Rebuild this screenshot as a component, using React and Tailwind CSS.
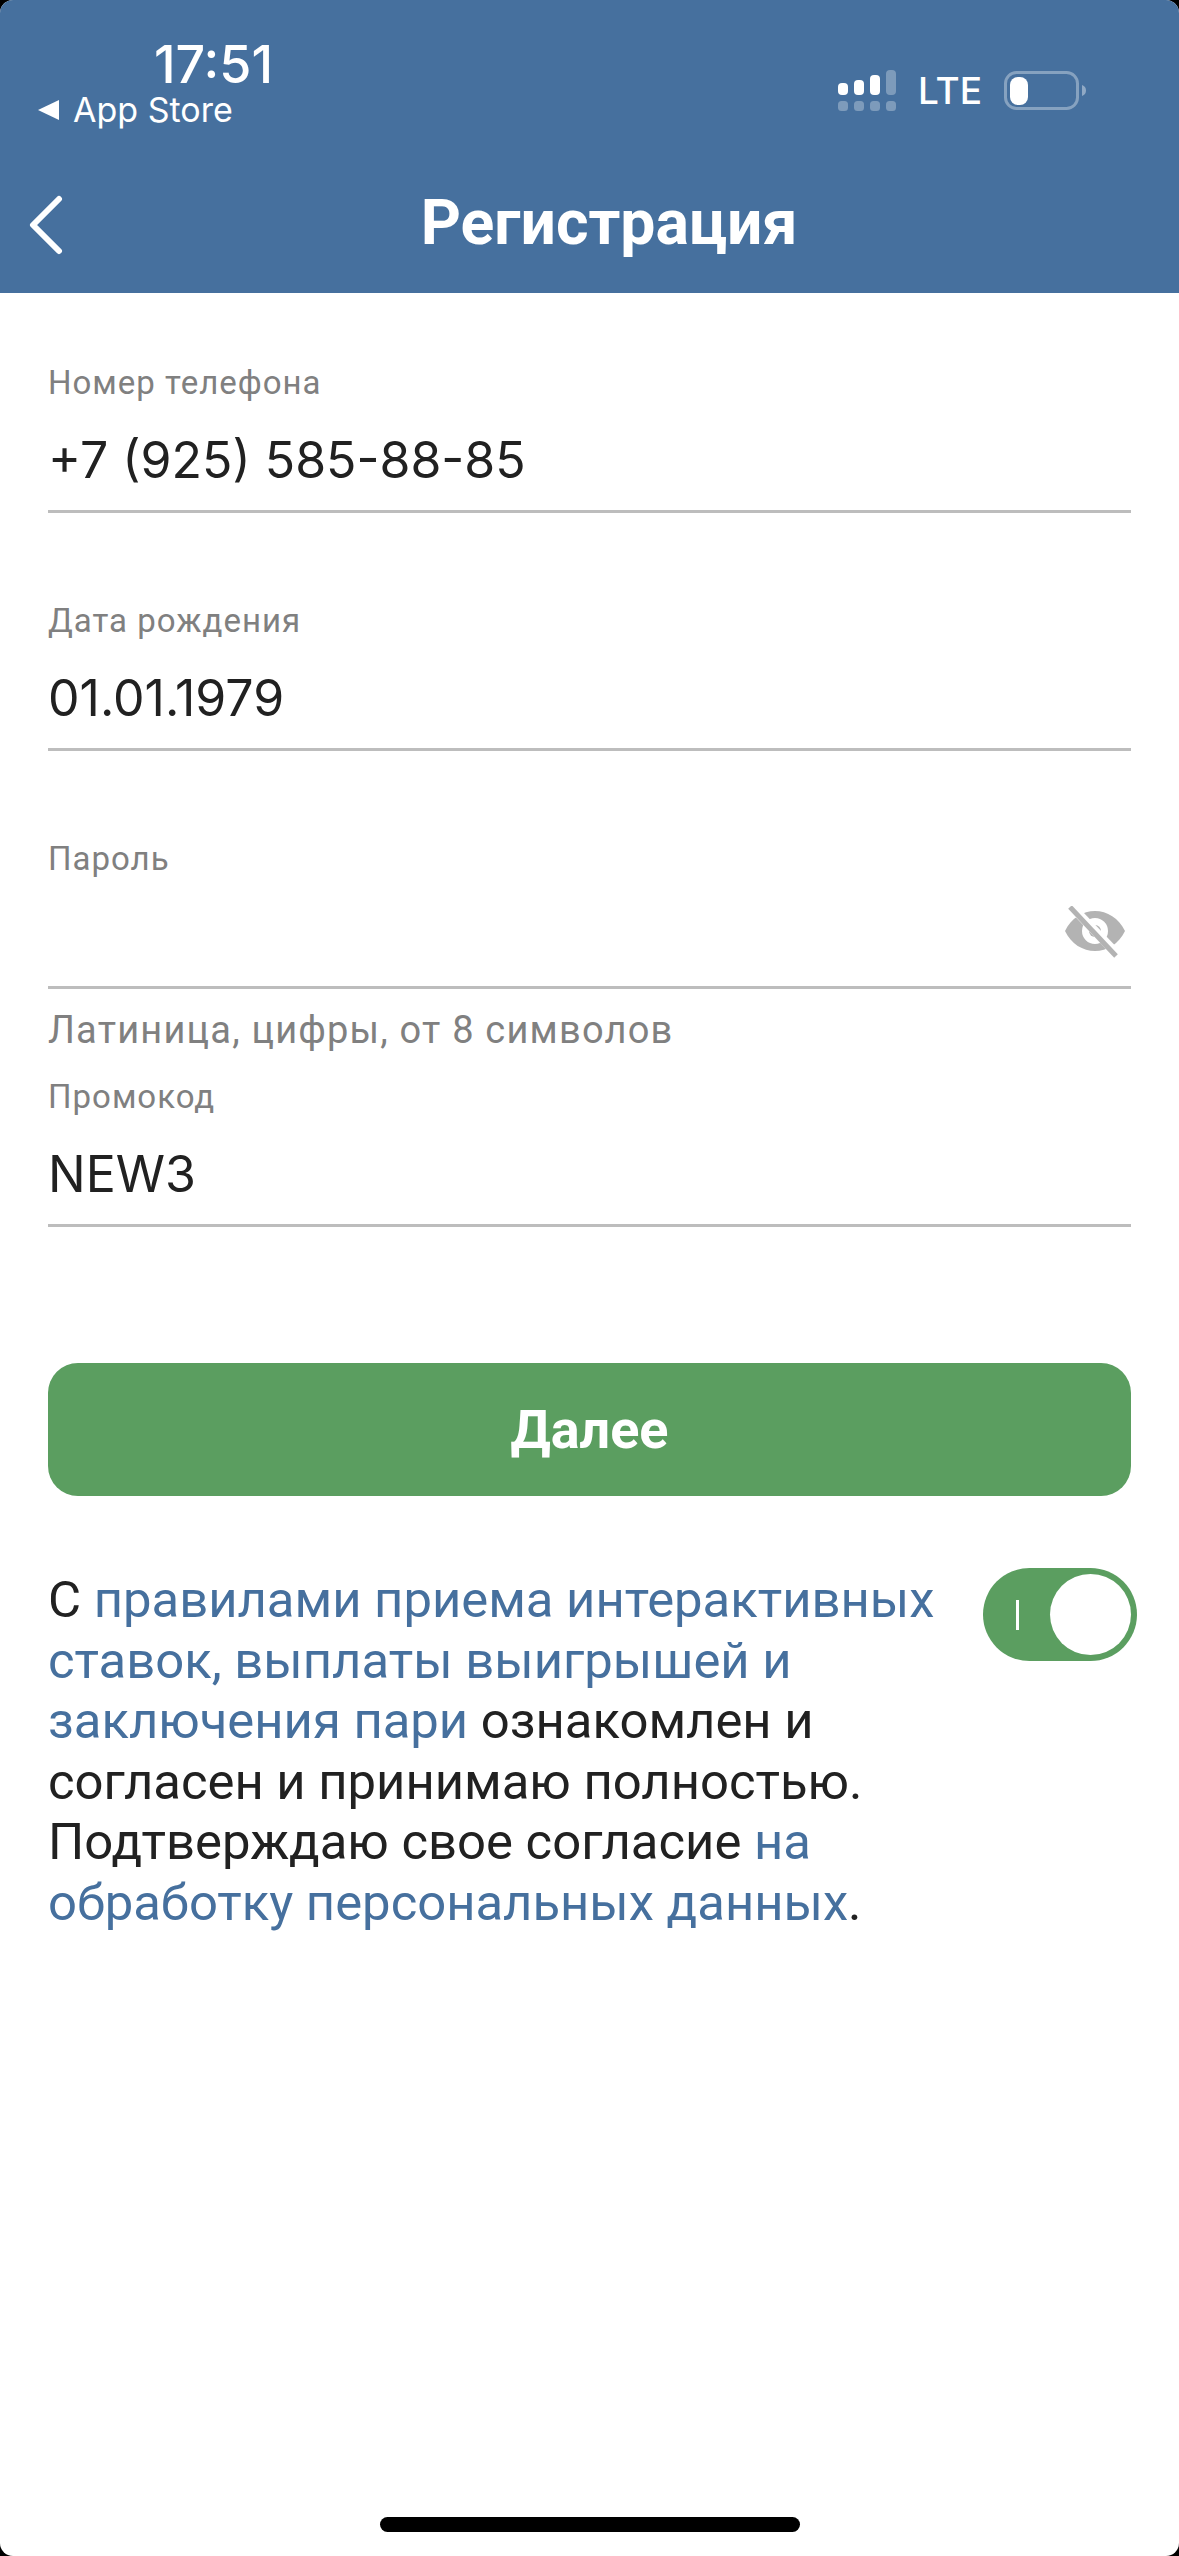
function Field({ label, value, children }) {
  return (
    <div>
      <div className="h-[40px] font-['Roboto',sans-serif] text-[33px] leading-[40px] tracking-[1px] text-[#808080]">{label}</div>
      <div className="mt-[17px] flex h-[93px] items-center justify-between border-b-[3px] border-[#bdbdbd] pb-[10px] font-['Inter',sans-serif] text-[50px] text-[#212121]">
        <span>{value}</span>
        {children}
      </div>
    </div>
  );
}

function Signal() {
  return (
    <svg width="58" height="42" viewBox="0 0 58 42" className="block">
      <rect x="0" y="13" width="10" height="12" rx="4" fill="#fff" />
      <rect x="16" y="10" width="10" height="15" rx="4" fill="#fff" />
      <rect x="32" y="5" width="10" height="20" rx="4" fill="#fff" />
      <rect x="48" y="0" width="10" height="25" rx="4" fill="#fff" fillOpacity="0.3" />
      <rect x="0" y="31" width="10" height="10" rx="3.5" fill="#fff" fillOpacity="0.3" />
      <rect x="16" y="31" width="10" height="10" rx="3.5" fill="#fff" fillOpacity="0.3" />
      <rect x="32" y="31" width="10" height="10" rx="3.5" fill="#fff" fillOpacity="0.3" />
      <rect x="48" y="31" width="10" height="10" rx="3.5" fill="#fff" fillOpacity="0.3" />
    </svg>
  );
}

function Battery() {
  return (
    <svg width="84" height="40" viewBox="0 0 84 40" className="block">
      <rect x="1.5" y="1.5" width="72" height="36" rx="11" fill="none" stroke="#fff" strokeOpacity="0.35" strokeWidth="3" />
      <rect x="6" y="6" width="18" height="28" rx="8" fill="#fff" />
      <path d="M78 14c3 1 4 3 4 5.500s-1 4.500-4 5.500z" fill="#fff" fillOpacity="0.4" />
    </svg>
  );
}

function BackArrow() {
  return (
    <svg width="36" height="60" viewBox="0 0 36 60" className="block shrink-0">
      <path d="M31 4L5 30l26 26" fill="none" stroke="#fff" strokeWidth="6" strokeLinecap="round" strokeLinejoin="round" />
    </svg>
  );
}

function EyeOff() {
  return (
    <svg width="60" height="52" viewBox="0 0 60 52" className="mb-[8px] mr-[6px] block">
      <path
        fillRule="evenodd"
        fill="#b3b3b3"
        d="M0 25C6 12 18 5 30 5s24 7 30 20c-6 13-18 20-30 20S6 38 0 25zm30-13a13 13 0 1 0 0 26 13 13 0 0 0 0-26z"
      />
      <circle cx="30" cy="25" r="6" fill="#b3b3b3" />
      <path d="M7 1l46 48" stroke="#ffffff" strokeWidth="9" />
      <path d="M5 1l46 49" stroke="#b3b3b3" strokeWidth="5" />
    </svg>
  );
}

function Toggle() {
  return (
    <div className="mt-[2px] flex h-[93px] w-[154px] shrink-0 items-center justify-between rounded-full bg-[#5b9e60] pl-[33px] pr-[6px]">
      <div className="h-[30px] w-[3px] bg-white" />
      <div className="h-[81px] w-[81px] rounded-full bg-white" />
    </div>
  );
}

export default function App() {
  return (
    <div className="h-[2556px] w-[1179px] bg-black">
      <div className="flex h-full flex-col overflow-hidden rounded-[13px] bg-white font-['Roboto',sans-serif]">
        <header className="h-[293px] shrink-0 bg-[#46709e] text-white">
          <div className="flex h-[165px] justify-between pl-[38px] pr-[91px] font-['Inter',sans-serif]">
            <div className="pt-[37px]">
              <div className="pl-[116px] text-[52px] leading-[56px] font-medium">17:51</div>
              <div className="-mt-[3px] flex items-center gap-[14px] text-[34px] leading-[40px]">
                <span className="h-0 w-0 border-y-[10px] border-r-[21px] border-y-transparent border-r-white" />
                <span>App Store</span>
              </div>
            </div>
            <div className="flex items-center gap-[22px] pt-[16px]">
              <Signal />
              <span className="text-[37px] font-medium">LTE</span>
              <Battery />
            </div>
          </div>
          <div className="mt-[28px] flex h-[64px] items-center pl-[28px]">
            <BackArrow />
            <h1 className="mb-[4px] flex-1 pr-[25px] text-center text-[62.500px] leading-none font-bold">Регистрация</h1>
          </div>
        </header>

        <main className="flex flex-1 flex-col px-[48px]">
          <div className="flex flex-col gap-[88px] pt-[70px]">
            <Field label="Номер телефона" value="+7 (925) 585-88-85" />
            <Field label="Дата рождения" value="01.01.1979" />
          </div>
          <div className="mt-[88px]">
            <Field label="Пароль" value="">
              <EyeOff />
            </Field>
          </div>
          <div className="mt-[21px] text-[38px] leading-[40px] tracking-[1.2px] text-[#808080]">Латиница, цифры, от 8 символов</div>
          <div className="mt-[27px]">
            <Field label="Промокод" value="NEW3" />
          </div>

          <button className="mt-[136px] h-[133px] w-full rounded-[30px] bg-[#5b9e60] text-[54px] font-bold text-white">
            Далее
          </button>

          <div className="mt-[70px] flex justify-between">
            <p className="w-[900px] pt-[4px] text-[50.800px] leading-[60.500px] text-[#212121]">
              С <span className="text-[#46709e]">правилами приема интерактивных ставок, выплаты выигрышей и заключения пари</span>{" "}
              ознакомлен и согласен и принимаю полностью. Подтверждаю свое согласие{" "}
              <span className="text-[#46709e]">на обработку персональных данных</span>.
            </p>
            <div className="-mr-[6px]">
              <Toggle />
            </div>
          </div>

          <div className="mt-auto mb-[24px] h-[15px] w-[420px] self-center rounded-full bg-black" />
        </main>
      </div>
    </div>
  );
}
